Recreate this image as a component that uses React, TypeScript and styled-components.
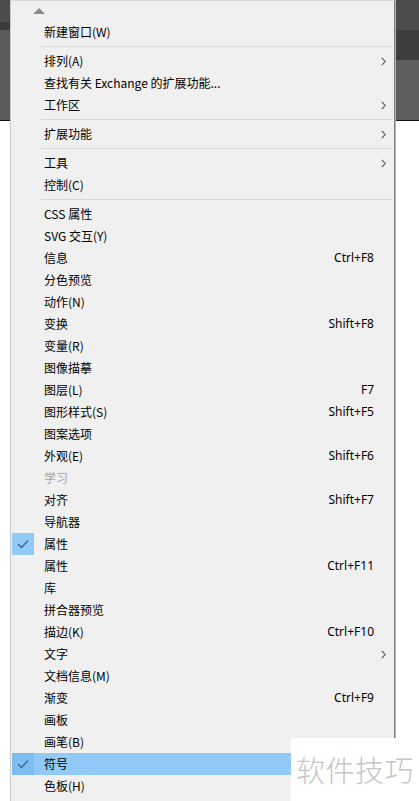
import React from 'react'
import styled, { createGlobalStyle } from 'styled-components'

const GlobalStyle = createGlobalStyle`
  html, body {
    margin: 0;
    padding: 0;
    background: #ffffff;
  }
  body {
    font-family: "Noto Sans CJK SC", "Noto Sans", sans-serif;
  }
`

const Screen = styled.div`
  position: relative;
  width: 419px;
  height: 801px;
  display: flex;
  overflow: hidden;
  background: #ffffff;
`

const Backdrop = styled.div<{ $width?: number }>`
  display: flex;
  flex-direction: column;
  width: ${(p) => (p.$width ? `${p.$width}px` : 'auto')};
  flex: ${(p) => (p.$width ? '0 0 auto' : '1 1 auto')};
`

const Band = styled.div<{ $h: number; $color: string }>`
  height: ${(p) => p.$h}px;
  background: ${(p) => p.$color};
  flex: 0 0 auto;
`

const Menu = styled.div`
  flex: 0 0 auto;
  width: 385px;
  background: #f0f0f0;
  border-left: 1px solid #c9c9c9;
  border-top: 1px solid #d6d6d6;
  border-right: 1px solid #7c7c7c;
  box-shadow: 1px 0 0 #b4b4b4;
  margin-right: 1px;
  padding: 0 1px;
  box-sizing: border-box;
  display: flex;
  flex-direction: column;
`

const ScrollArrow = styled.div`
  height: 20px;
  display: flex;
  align-items: center;
  padding-left: 21px;
`

const Row = styled.div<{ $highlight?: boolean; $disabled?: boolean }>`
  height: 22px;
  flex: 0 0 auto;
  display: flex;
  align-items: center;
  background: ${(p) => (p.$highlight ? '#91c9f7' : 'transparent')};
  color: ${(p) => (p.$disabled ? '#a0a0a0' : '#000000')};
  font-size: 12px;
  line-height: 22px;
  white-space: nowrap;
`

const CheckCell = styled.div<{ $on?: boolean; $highlight?: boolean }>`
  width: 22px;
  height: 22px;
  margin-right: 10px;
  display: flex;
  align-items: center;
  justify-content: center;
  background: ${(p) => (p.$on ? (p.$highlight ? '#7ebdf2' : '#91c9f7') : 'transparent')};
`

const Label = styled.span`
  flex: 1 1 auto;
`

const Shortcut = styled.span`
  margin-right: 19px;
  font-family: "Noto Sans", "Noto Sans CJK SC", sans-serif;
  font-size: 12px;
`

const SubArrow = styled.span`
  width: 18px;
  margin-right: 1px;
  display: flex;
  justify-content: center;
`

const Separator = styled.div`
  flex: 0 0 auto;
  height: 1px;
  margin: 3px 1px 3px 29px;
  background: #d7d7d7;
`

const Watermark = styled.div`
  position: absolute;
  right: 0;
  bottom: 0;
  width: 128px;
  height: 63px;
  background: #ffffff;
  box-sizing: border-box;
  padding: 14px 0 0 5px;
  color: #c6c6c6;
  font-size: 29px;
  line-height: 34px;
  letter-spacing: 0.5px;
  font-weight: 300;
`

type Item =
  | { sep: true }
  | {
      sep?: false
      label: string
      shortcut?: string
      sub?: boolean
      checked?: boolean
      highlight?: boolean
      disabled?: boolean
    }

const items: Item[] = [
  { label: '新建窗口(W)' },
  { sep: true },
  { label: '排列(A)', sub: true },
  { label: '查找有关 Exchange 的扩展功能...' },
  { label: '工作区', sub: true },
  { sep: true },
  { label: '扩展功能', sub: true },
  { sep: true },
  { label: '工具', sub: true },
  { label: '控制(C)' },
  { sep: true },
  { label: 'CSS 属性' },
  { label: 'SVG 交互(Y)' },
  { label: '信息', shortcut: 'Ctrl+F8' },
  { label: '分色预览' },
  { label: '动作(N)' },
  { label: '变换', shortcut: 'Shift+F8' },
  { label: '变量(R)' },
  { label: '图像描摹' },
  { label: '图层(L)', shortcut: 'F7' },
  { label: '图形样式(S)', shortcut: 'Shift+F5' },
  { label: '图案选项' },
  { label: '外观(E)', shortcut: 'Shift+F6' },
  { label: '学习', disabled: true },
  { label: '对齐', shortcut: 'Shift+F7' },
  { label: '导航器' },
  { label: '属性', checked: true },
  { label: '属性', shortcut: 'Ctrl+F11' },
  { label: '库' },
  { label: '拼合器预览' },
  { label: '描边(K)', shortcut: 'Ctrl+F10' },
  { label: '文字', sub: true },
  { label: '文档信息(M)' },
  { label: '渐变', shortcut: 'Ctrl+F9' },
  { label: '画板' },
  { label: '画笔(B)' },
  { label: '符号', checked: true, highlight: true },
  { label: '色板(H)' },
]

const Check = () => (
  <svg width="12" height="10" viewBox="0 0 12 10">
    <polyline points="1,5 4.5,8.5 11,1.5" fill="none" stroke="#3a6591" strokeWidth="1.3" />
  </svg>
)

const Chevron = () => (
  <svg width="5" height="9" viewBox="0 0 5 9">
    <polyline points="0.8,0.8 4.2,4.5 0.8,8.2" fill="none" stroke="#555555" strokeWidth="1.1" />
  </svg>
)

const App: React.FC = () => {
  return (
    <>
      <GlobalStyle />
      <Screen>
        <Backdrop $width={10}>
          <Band $h={22} $color="#4d4d4d" />
          <Band $h={8} $color="#3a3a3a" />
          <Band $h={90} $color="#5a5a5a" />
          <Band $h={1} $color="#151515" />
        </Backdrop>
        <Menu>
          <ScrollArrow>
            <svg width="12" height="6" viewBox="0 0 12 6">
              <polygon points="6,0 12,6 0,6" fill="#8c8c8c" />
            </svg>
          </ScrollArrow>
          {items.map((it, i) =>
            it.sep ? (
              <Separator key={i} />
            ) : (
              <Row key={i} $highlight={it.highlight} $disabled={it.disabled}>
                <CheckCell $on={it.checked} $highlight={it.highlight}>
                  {it.checked && <Check />}
                </CheckCell>
                <Label>{it.label}</Label>
                {it.shortcut && <Shortcut>{it.shortcut}</Shortcut>}
                {it.sub && (
                  <SubArrow>
                    <Chevron />
                  </SubArrow>
                )}
              </Row>
            )
          )}
        </Menu>
        <Backdrop>
          <Band $h={30} $color="#4c4c4c" />
          <Band $h={30} $color="#3d3d3d" />
          <Band $h={60} $color="#5e5e5e" />
          <Band $h={1} $color="#151515" />
        </Backdrop>
        <Watermark>软件技巧</Watermark>
      </Screen>
    </>
  )
}

export default App
